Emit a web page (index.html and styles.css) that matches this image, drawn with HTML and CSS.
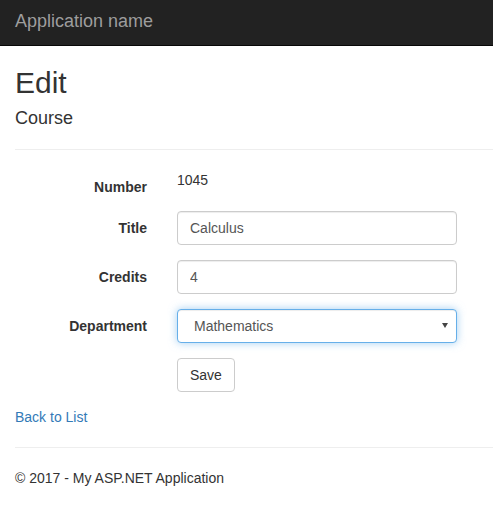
FILE: index.html
```html
<!DOCTYPE html>
<html lang="en">
<head>
<meta charset="utf-8">
<title>Edit - My ASP.NET Application</title>
<link rel="stylesheet" href="styles.css">
</head>
<body>
<div class="navbar">
  <a class="navbar-brand" href="#">Application name</a>
</div>
<div class="body-content">
  <h2 class="page-title">Edit</h2>
  <h4 class="page-subtitle">Course</h4>
  <hr class="rule">
  <form class="form-horizontal">
    <div class="form-group">
      <label class="control-label">Number</label>
      <div class="control-col">1045</div>
    </div>
    <div class="form-group">
      <label class="control-label label-field">Title</label>
      <div class="control-col"><input class="form-control" type="text" value="Calculus"></div>
    </div>
    <div class="form-group">
      <label class="control-label label-field">Credits</label>
      <div class="control-col"><input class="form-control" type="text" value="4"></div>
    </div>
    <div class="form-group">
      <label class="control-label label-field">Department</label>
      <div class="control-col">
        <div class="select-wrap">
          <select class="form-control select-control focused">
            <option>Mathematics</option>
          </select>
        </div>
      </div>
    </div>
    <div class="form-group">
      <div class="offset-col"></div>
      <div class="control-col"><button type="button" class="btn">Save</button></div>
    </div>
  </form>
  <div class="back-link"><a href="#">Back to List</a></div>
  <hr class="rule">
  <footer class="footer">
    <p>© 2017 - My ASP.NET Application</p>
  </footer>
</div>
</body>
</html>
```
FILE: styles.css
```css
* { box-sizing: border-box; }
html, body { margin: 0; padding: 0; }
body {
  font-family: "Liberation Sans", Arial, Helvetica, sans-serif;
  font-size: 14px;
  line-height: 1.42857143;
  color: #333;
  background: #fff;
  overflow: hidden;
}
.navbar {
  height: 46px;
  background: #222;
  border-bottom: 1px solid #080808;
}
.navbar-brand {
  display: block;
  padding: 11px 15px 0;
  font-size: 18px;
  line-height: 20px;
  color: #9d9d9d;
  text-decoration: none;
}
.body-content {
  padding-left: 15px;
}
.page-title {
  margin: 20px 0 10px;
  font-size: 30px;
  font-weight: 500;
  line-height: 1.1;
}
.page-subtitle {
  margin: 10px 0 10px;
  font-size: 18px;
  font-weight: 500;
  line-height: 1.1;
}
.rule {
  margin: 20px 0;
  border: 0;
  border-top: 1px solid #eee;
  height: 0;
}
.form-horizontal {
  margin-left: -15px;
}
.form-group {
  display: flex;
  align-items: flex-start;
  margin-bottom: 15px;
}
.form-group:first-child { margin-bottom: 14px; }
.control-label, .offset-col {
  flex: 0 0 162px;
  width: 162px;
  padding: 7px 15px 0;
  text-align: right;
  font-weight: bold;
}
.offset-col { padding-top: 0; }
.control-col {
  flex: 1;
  padding: 0 15px;
}
.form-control {
  display: block;
  width: 280px;
  height: 34px;
  padding: 6px 12px;
  font-family: inherit;
  font-size: 14px;
  line-height: 1.42857143;
  color: #555;
  background: #fff;
  border: 1px solid #ccc;
  border-radius: 4px;
  box-shadow: inset 0 1px 1px rgba(0,0,0,.075);
  outline: none;
}
.select-wrap {
  position: relative;
  width: 280px;
}
.select-control {
  -webkit-appearance: none;
  appearance: none;
  padding-left: 16px;
}
.select-wrap::after {
  content: "";
  position: absolute;
  right: 9px;
  top: 14px;
  width: 0;
  height: 0;
  border-left: 3px solid transparent;
  border-right: 3px solid transparent;
  border-top: 5px solid #444;
  pointer-events: none;
}
.focused {
  border-color: #66afe9;
  box-shadow: inset 0 1px 1px rgba(0,0,0,.075), 0 0 8px rgba(102,175,233,.6);
}
.btn {
  display: inline-block;
  height: 34px;
  padding: 6px 12px;
  font-family: inherit;
  font-size: 14px;
  line-height: 1.42857143;
  color: #333;
  background: #fff;
  border: 1px solid #ccc;
  border-radius: 4px;
}
.back-link a {
  color: #337ab7;
  text-decoration: none;
}
.footer p {
  margin: 0 0 10px;
}
```
